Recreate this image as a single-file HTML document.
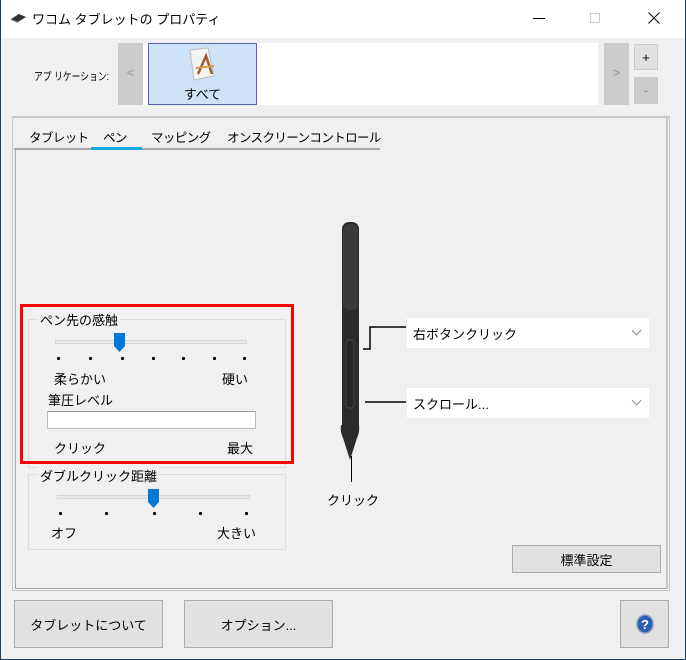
<!DOCTYPE html>
<html><head><meta charset="utf-8"><style>
*{box-sizing:border-box;margin:0;padding:0}
body{width:686px;height:660px;overflow:hidden;background:#f0f0f0;font-family:"Liberation Sans","Noto Sans CJK JP",sans-serif;font-size:13px;color:#000;position:relative}
.a{position:absolute}
.win{position:absolute;left:0;top:0;width:686px;height:660px;border:1px solid #1c3f6b;border-top:none}
.btn{position:absolute;background:#e1e1e1;border:1px solid #adadad;display:flex;align-items:center;justify-content:center;font-size:13px}
.grp{position:absolute;border:1px solid #dcdcdc}
.lbl{position:absolute;background:#f0f0f0;padding:0 2px}
.track{position:absolute;height:4px;background:#e7eaea;border:1px solid #d6d6d6}
.dot{position:absolute;width:3px;height:3px;background:#000;border-radius:1px}
.thumb{position:absolute;width:11px;height:19px}
.combo{position:absolute;background:#fff;height:30px;display:flex;align-items:center;padding-left:6px;font-size:13px}
.combo:after{content:"";position:absolute;right:9px;top:9px;width:6px;height:6px;border-right:1px solid #888;border-bottom:1px solid #888;transform:rotate(45deg)}
.tab{position:absolute;top:127px;font-size:12.5px;letter-spacing:-0.6px}
</style></head><body>
<div class="win"></div>
<div class="a" style="left:1px;top:0;width:684px;height:38px;background:#fff"></div>
<svg class="a" style="left:9px;top:12px" width="18" height="12"><path d="M2 7 L10 2 L17 5 L9 10 Z" fill="#333"/><path d="M2 7 L9 10 L9 11 L2 8Z" fill="#777"/></svg>
<div class="a" style="left:32px;top:9px;font-size:13px">ワコム タブレットの プロパティ</div>
<div class="a" style="left:533px;top:18px;width:12px;height:1px;background:#000"></div>
<div class="a" style="left:590px;top:13px;width:10px;height:10px;border:1px solid #ccc"></div>
<svg class="a" style="left:648px;top:12px" width="12" height="12"><path d="M0.5 0.5L11.5 11.5M11.5 0.5L0.5 11.5" stroke="#000" stroke-width="1"/></svg>

<div class="a" style="left:34px;top:68px;font-size:11px;transform:scaleX(.8);transform-origin:left">アプ リケーション:</div>
<div class="a" style="left:118px;top:43px;width:480px;height:62px;background:#fff"></div>
<div class="a" style="left:118px;top:43px;width:25px;height:62px;background:#ccc;color:#999;text-align:center;line-height:60px">&lt;</div>
<div class="a" style="left:148px;top:43px;width:109px;height:62px;background:#cde1f7;border:1px solid #5863b5"></div>
<svg class="a" style="left:186px;top:46px" width="36" height="38"><path d="M4 4 L22 2 L28 30 L8 34Z" fill="#f4f4f4" stroke="#bbb"/><path d="M12 28 L20 10 L26 28" stroke="#a15a2a" stroke-width="2.5" fill="none"/><path d="M10 22 L28 20" stroke="#d79a4a" stroke-width="2"/></svg>
<div class="a" style="left:148px;top:84px;width:109px;text-align:center;font-size:13px">すべて</div>
<div class="a" style="left:604px;top:43px;width:25px;height:62px;background:#ccc;color:#999;text-align:center;line-height:60px">&gt;</div>
<div class="btn" style="left:634px;top:44px;width:24px;height:26px;background:#e1e1e1;border-color:#ccc">+</div>
<div class="btn" style="left:634px;top:77px;width:24px;height:27px;background:#ccc;border-color:#ccc;color:#888">-</div>

<div class="a" style="left:12px;top:116px;width:658px;height:475px;border:1px solid #c8c8c8;border-top:2px solid #c8c8c8"></div>
<div class="a" style="left:14px;top:148px;width:366px;height:2px;background:#a8a8a8"></div>
<div class="a" style="left:91px;top:147px;width:51px;height:3px;background:#16a9e0"></div>
<div class="a" style="left:15px;top:149px;width:652px;height:440px;border:1px solid #a8a8a8;border-top:none"></div>
<div class="a" style="left:666px;top:118px;width:2px;height:471px;background:#c8c8c8"></div>
<div class="tab" style="left:29px">タブレット</div>
<div class="tab" style="left:103px">ペン</div>
<div class="tab" style="left:151px">マッピング</div>
<div class="tab" style="left:227px">オンスクリーンコントロール</div>

<div class="grp" style="left:28px;top:319px;width:258px;height:149px"></div>
<div class="lbl" style="left:38px;top:310px">ペン先の感触</div>
<div class="track" style="left:55px;top:340px;width:192px"></div>
<svg class="thumb" style="left:114px;top:333px" width="11" height="19"><path d="M0 0H11V13L5.5 19L0 13Z" fill="#0078d7"/></svg>
<div class="dot" style="left:57px;top:357px"></div><div class="dot" style="left:89px;top:357px"></div><div class="dot" style="left:121px;top:357px"></div><div class="dot" style="left:152px;top:357px"></div><div class="dot" style="left:182px;top:357px"></div><div class="dot" style="left:213px;top:357px"></div><div class="dot" style="left:243px;top:357px"></div>
<div class="a" style="left:54px;top:369px">柔らかい</div>
<div class="a" style="left:222px;top:369px">硬い</div>
<div class="a" style="left:48px;top:390px">筆圧レベル</div>
<div class="a" style="left:47px;top:411px;width:209px;height:18px;background:#fff;border:1px solid #bbb;border-top-color:#999"></div>
<div class="a" style="left:54px;top:438px">クリック</div>
<div class="a" style="left:227px;top:438px">最大</div>
<div class="a" style="left:20px;top:304px;width:274px;height:160px;border:3px solid #f00"></div>

<div class="grp" style="left:28px;top:474px;width:258px;height:76px"></div>
<div class="lbl" style="left:38px;top:466px">ダブルクリック距離</div>
<div class="track" style="left:57px;top:495px;width:193px"></div>
<svg class="thumb" style="left:148px;top:489px" width="11" height="19"><path d="M0 0H11V13L5.5 19L0 13Z" fill="#0078d7"/></svg>
<div class="dot" style="left:59px;top:512px"></div><div class="dot" style="left:105px;top:512px"></div><div class="dot" style="left:153px;top:512px"></div><div class="dot" style="left:199px;top:512px"></div><div class="dot" style="left:245px;top:512px"></div>
<div class="a" style="left:51px;top:523px">オフ</div>
<div class="a" style="left:217px;top:523px">大きい</div>

<svg class="a" style="left:330px;top:220px" width="80" height="240">
<rect x="12" y="2" width="17" height="210" rx="7" fill="#2b2b2b"/>
<rect x="13" y="4" width="15" height="86" rx="6" fill="#3a3a3a"/>
<rect x="16" y="120" width="8" height="68" rx="3" fill="#262626" stroke="#555" stroke-width=".7"/>
<path d="M11 205 Q10 212 13 218 L20 240 L27 218 Q30 212 29 205Z" fill="#2b2b2b"/>
<path d="M33 129 H40 V107 H76" stroke="#000" stroke-width="1.5" fill="none"/>
<path d="M35 182 H76" stroke="#000" stroke-width="1.5"/>
</svg>
<div class="a" style="left:351px;top:456px;width:1px;height:26px;background:#000"></div>
<div class="a" style="left:327px;top:490px">クリック</div>
<div class="combo" style="left:407px;top:318px;width:242px">右ボタンクリック</div>
<div class="combo" style="left:407px;top:388px;width:242px">スクロール...</div>

<div class="btn" style="left:512px;top:545px;width:149px;height:28px">標準設定</div>
<div class="btn" style="left:14px;top:600px;width:149px;height:48px">タブレットについて</div>
<div class="btn" style="left:184px;top:600px;width:149px;height:48px">オプション...</div>
<div class="btn" style="left:620px;top:600px;width:49px;height:48px">
<svg width="18" height="20"><ellipse cx="9" cy="10" rx="8" ry="9" fill="#2a5db5" stroke="#8a9bb8" stroke-width="1.5"/><text x="9" y="15" font-size="13" font-weight="bold" fill="#fff" text-anchor="middle" font-family="Liberation Sans">?</text></svg>
</div>
</body></html>
